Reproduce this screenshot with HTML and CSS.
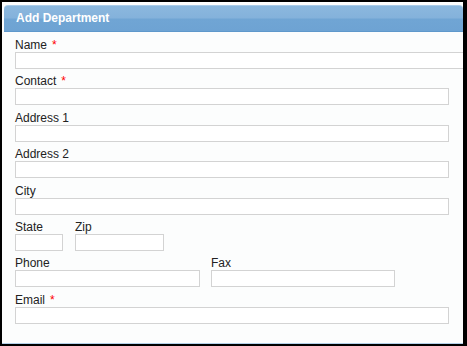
FILE: index.html
```html
<!DOCTYPE html>
<html>
<head>
<meta charset="utf-8">
<link rel="stylesheet" href="styles.css">
</head>
<body>
<div class="frame">
  <div class="panel">
    <div class="header">Add Department</div>
    <form class="form">
      <div class="field">
        <label class="label">Name<span class="req">*</span></label>
        <input class="input input-wide">
      </div>
      <div class="field">
        <label class="label">Contact<span class="req">*</span></label>
        <input class="input input-full">
      </div>
      <div class="field">
        <label class="label">Address 1</label>
        <input class="input input-full">
      </div>
      <div class="field">
        <label class="label">Address 2</label>
        <input class="input input-full">
      </div>
      <div class="field">
        <label class="label">City</label>
        <input class="input input-full">
      </div>
      <div class="row row-sz">
        <div class="field">
          <label class="label">State</label>
          <input class="input input-state">
        </div>
        <div class="field">
          <label class="label">Zip</label>
          <input class="input input-zip">
        </div>
      </div>
      <div class="row row-pf">
        <div class="field">
          <label class="label">Phone</label>
          <input class="input input-phone">
        </div>
        <div class="field">
          <label class="label">Fax</label>
          <input class="input input-fax">
        </div>
      </div>
      <div class="field">
        <label class="label">Email<span class="req">*</span></label>
        <input class="input input-full">
      </div>
    </form>
  </div>
</div>
</body>
</html>
```
FILE: styles.css
```css
html, body {
  margin: 0;
  padding: 0;
  background: #000;
}
.frame {
  box-sizing: border-box;
  width: 467px;
  height: 346px;
  border-style: solid;
  border-color: #000;
  border-width: 2px 4px 2px 2px;
  background: #fcfdfd;
  overflow: hidden;
}
.panel {
  box-sizing: border-box;
  height: 342px;
  border-bottom: 1px solid #b3cfe8;
  padding: 3px 0 0 2px;
  font-family: "Liberation Sans", Arial, sans-serif;
}
.header {
  box-sizing: border-box;
  height: 27px;
  border-radius: 4px 4px 0 0;
  border-top: 1px solid #a9cbe8;
  border-bottom: 1px solid #5f98cb;
  background: linear-gradient(to bottom, #8bb8de 0%, #84b2db 48%, #70a5d4 52%, #6ea3d3 100%);
  color: #fff;
  font-weight: bold;
  font-size: 12px;
  line-height: 25px;
  padding-left: 12px;
}
.form {
  padding: 6px 0 0 11px;
}
.field {
  display: flex;
  flex-direction: column;
  align-items: flex-start;
  margin-bottom: 5.4px;
}
.row {
  display: flex;
  gap: 12px;
}
.row-pf {
  gap: 11px;
}
.label {
  font-size: 12px;
  line-height: 14px;
  height: 14px;
  color: #222;
  white-space: nowrap;
}
.req {
  color: #f00;
  margin-left: 5px;
}
.input {
  box-sizing: border-box;
  height: 17px;
  margin: 0;
  padding: 0;
  border: 1px solid #d3d3d3;
  background: #fff;
  display: block;
}
.input-wide { width: 470px; }
.input-full { width: 434px; }
.input-state { width: 48px; }
.input-zip { width: 89px; }
.input-phone { width: 185px; }
.input-fax { width: 184px; }
```
